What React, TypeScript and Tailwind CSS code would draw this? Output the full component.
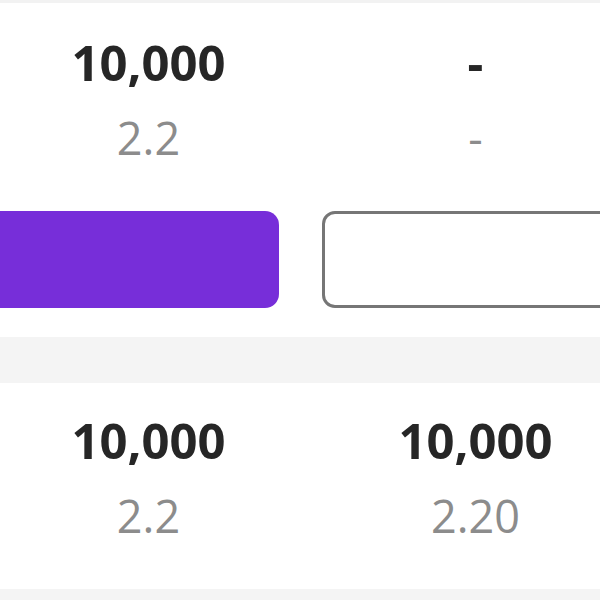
import React from 'react';

const font = { fontFamily: '"Open Sans", "Noto Sans", sans-serif' };

const Cell: React.FC<{ amount: string; rate: string }> = ({ amount, rate }) => (
  <div className="flex flex-col items-center">
    <div className="text-[49px] font-bold leading-[62px] text-[#262626]">{amount}</div>
    <div className="mt-[17px] text-[45px] font-normal leading-[56px] text-[#8c8c8c]">{rate}</div>
  </div>
);

export default function App() {
  return (
    <div className="w-[600px] h-[600px] overflow-hidden bg-[#f4f4f4]" style={font}>
      <div className="h-[3px] bg-[#f2f2f2]" />

      {/* first quote block */}
      <div className="bg-white h-[334px] pt-[28px] overflow-hidden">
        <div className="-ml-[15px] w-[654px] grid grid-cols-2">
          <Cell amount="10,000" rate="2.2" />
          <div className="flex flex-col items-center">
            <div className="text-[49px] font-bold leading-[62px] text-[#262626]">-</div>
            <div className="mt-[17px] text-[45px] font-normal leading-[56px] text-[#8c8c8c]">-</div>
          </div>
        </div>
        <div className="-ml-[30px] w-[680px] mt-[45px] flex gap-[43px]">
          <button className="w-[309px] h-[97px] rounded-[14px] bg-[#772ed9]" />
          <button className="w-[309px] h-[97px] rounded-[13px] border-[3px] border-[#767676] bg-white" />
        </div>
      </div>

      <div className="h-[46px] bg-[#f4f4f4]" />

      {/* second quote block */}
      <div className="bg-white h-[206px] pt-[26px] overflow-hidden">
        <div className="-ml-[15px] w-[654px] grid grid-cols-2">
          <Cell amount="10,000" rate="2.2" />
          <Cell amount="10,000" rate="2.20" />
        </div>
      </div>
    </div>
  );
}
